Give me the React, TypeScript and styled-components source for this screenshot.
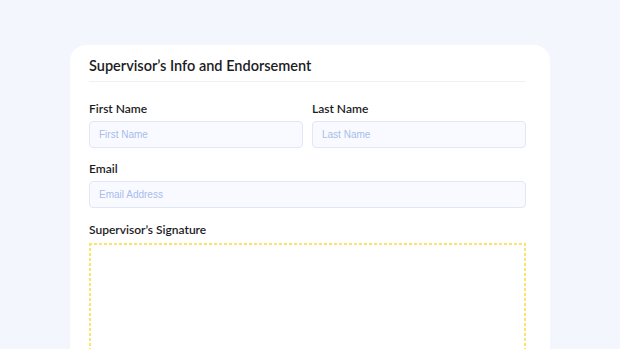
import React from "react";
import styled, { createGlobalStyle } from "styled-components";

const GlobalStyle = createGlobalStyle`
  html, body {
    margin: 0;
    padding: 0;
    background: #f3f6fd;
    font-family: "Lato", "Noto Sans", sans-serif;
    overflow: hidden;
  }
`;

const Page = styled.div`
  width: 620px;
  height: 349px;
  padding: 45px 70px 0 70px;
  box-sizing: border-box;
  overflow: hidden;
`;

const Card = styled.section`
  background: #ffffff;
  border-radius: 16px 16px 0 0;
  padding: 12px 24px 40px 19px;
  height: 340px;
  box-sizing: border-box;
`;

const Title = styled.h2`
  margin: 0;
  font-size: 14.5px;
  font-weight: 600;
  color: #1c1c1f;
  padding-bottom: 6px;
  border-bottom: 1px solid #edf0f5;
  line-height: 18px;
`;

const Row = styled.div`
  display: grid;
  grid-template-columns: 1fr 1fr;
  gap: 9px;
  margin-top: 18px;
`;

const Field = styled.div<{ $top?: number }>`
  display: flex;
  flex-direction: column;
  margin-top: ${(p) => p.$top ?? 0}px;
`;

const Label = styled.label`
  font-size: 12px;
  font-weight: 600;
  color: #1c1c1f;
  line-height: 17px;
  margin-bottom: 4px;
`;

const Input = styled.input`
  height: 27px;
  box-sizing: border-box;
  border: 1px solid #e0e7f7;
  background: #f8faff;
  border-radius: 4px;
  padding: 0 9px;
  font-family: "Liberation Sans", Arial, sans-serif;
  font-size: 10px;
  outline: none;
  &::placeholder {
    color: #a9bcec;
  }
`;

const dash = "#fbe46c";

const SignatureBox = styled.div`
  height: 140px;
  margin-top: 1px;
  background-image:
    repeating-linear-gradient(90deg, ${dash} 0 3px, transparent 3px 5px),
    repeating-linear-gradient(180deg, ${dash} 0 3px, transparent 3px 5px),
    repeating-linear-gradient(180deg, ${dash} 0 3px, transparent 3px 5px);
  background-size: 100% 2px, 2px 100%, 2px 100%;
  background-position: left top, left top, right top;
  background-repeat: no-repeat;
`;

export default function App() {
  return (
    <>
      <GlobalStyle />
      <Page>
        <Card>
          <Title>Supervisor’s Info and Endorsement</Title>
          <Row>
            <Field>
              <Label>First Name</Label>
              <Input placeholder="First Name" />
            </Field>
            <Field>
              <Label>Last Name</Label>
              <Input placeholder="Last Name" />
            </Field>
          </Row>
          <Field $top={12}>
            <Label>Email</Label>
            <Input placeholder="Email Address" />
          </Field>
          <Field $top={13}>
            <Label>Supervisor’s Signature</Label>
            <SignatureBox />
          </Field>
        </Card>
      </Page>
    </>
  );
}
